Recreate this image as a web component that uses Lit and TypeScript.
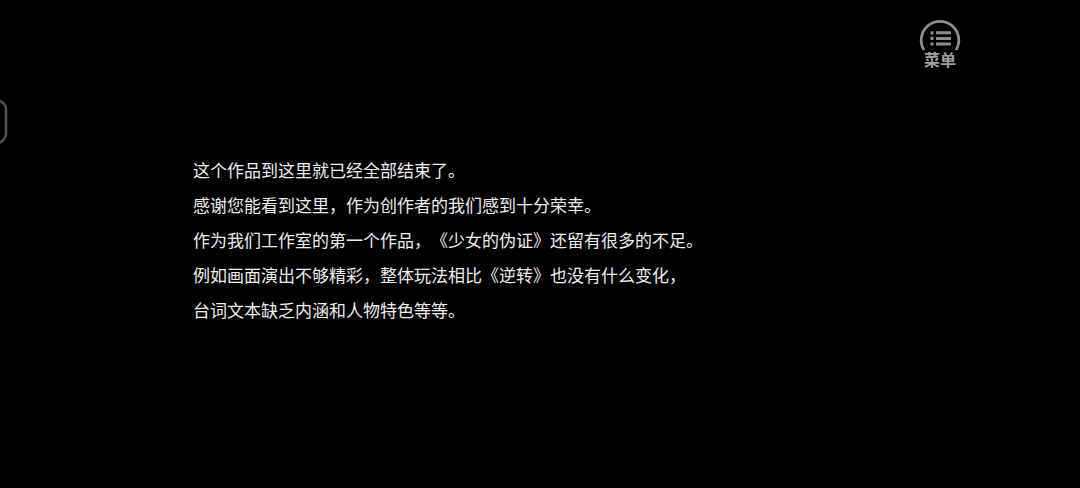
import { LitElement, html, css } from "lit";
import { customElement } from "lit/decorators.js";

const LINES = [
  "这个作品到这里就已经全部结束了。",
  "感谢您能看到这里，作为创作者的我们感到十分荣幸。",
  "作为我们工作室的第一个作品，《少女的伪证》还留有很多的不足。",
  "例如画面演出不够精彩，整体玩法相比《逆转》也没有什么变化，",
  "台词文本缺乏内涵和人物特色等等。",
];

@customElement("app-root")
export class AppRoot extends LitElement {
  static styles = css`
    :host {
      display: block;
      position: relative;
      width: 1080px;
      height: 488px;
      background: #000;
      overflow: hidden;
      font-family: "Noto Sans CJK SC", "Liberation Sans", sans-serif;
      text-spacing-trim: space-all;
    }
    .story {
      display: flex;
      flex-direction: column;
      gap: 11px;
      padding: 158px 0 0 193px;
      color: #eeeeee;
      font-size: 17px;
      line-height: 24px;
    }
    .story div {
      white-space: nowrap;
    }
    .menu {
      position: absolute;
      left: 916px;
      top: 18px;
      width: 48px;
      display: flex;
      flex-direction: column;
      align-items: center;
    }
    .menu svg {
      display: block;
    }
    .menu span {
      margin-top: -13px;
      color: #a0a0a0;
      font-size: 16px;
      font-weight: 700;
      line-height: 20px;
    }
    .tab {
      position: absolute;
      left: 0;
      top: 98px;
    }
  `;

  render() {
    return html`
      <div class="story">${LINES.map((l) => html`<div>${l}</div>`)}</div>
      <div class="menu">
        <svg width="48" height="44" viewBox="0 0 48 44" fill="none" stroke="#8e8e8e">
          <path d="M8 32A18.800 18.800 0 1 1 40 32" stroke-width="2.800" />
          <path d="M20 14.800H35M20 20.400H35M20 26H35" stroke-width="3" />
          <path d="M14.500 14.800H17.500M14.500 20.400H17.500M14.500 26H17.500" stroke-width="3.200" />
        </svg>
        <span>菜单</span>
      </div>
      <svg class="tab" width="10" height="48" viewBox="0 0 10 48" fill="none">
        <path d="M0 2.500L4 6Q6 8 6 11V36Q6 39 4 41L0 45" stroke="#505050" stroke-width="2.600" />
      </svg>
    `;
  }
}
